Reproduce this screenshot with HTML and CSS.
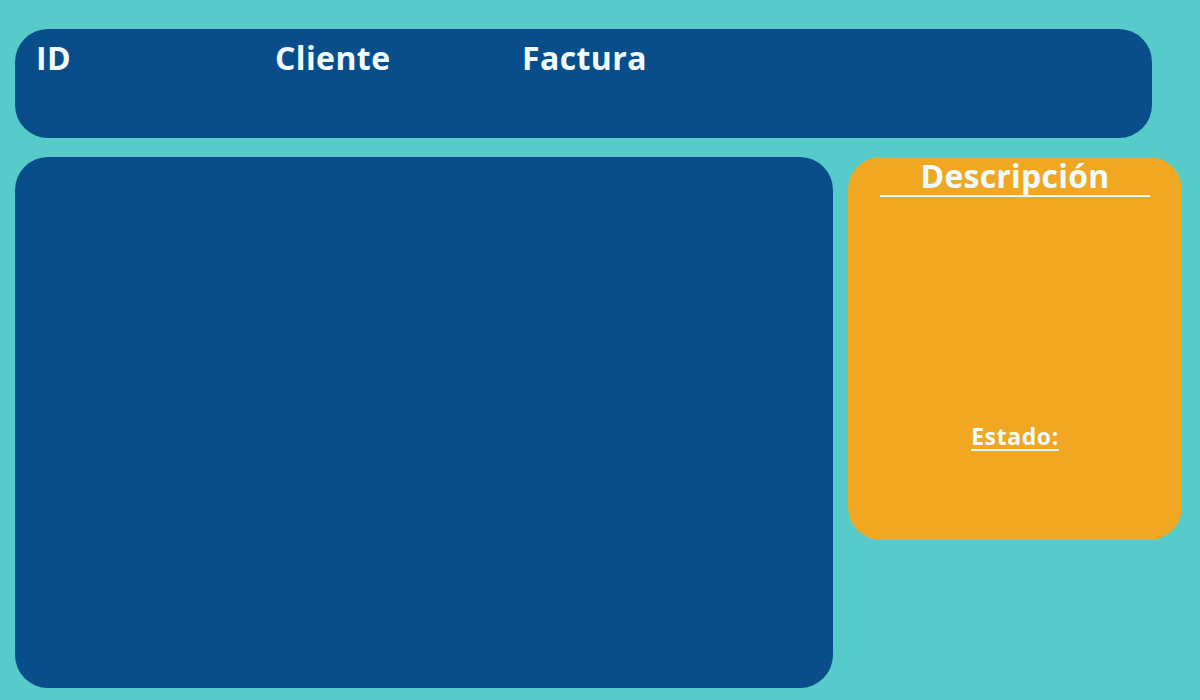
FILE: index.html
```html
<!DOCTYPE html>
<html lang="es">
<head>
<meta charset="utf-8">
<title>Facturas</title>
<link rel="stylesheet" href="styles.css">
</head>
<body>
<div class="page">
  <header class="header">
    <span class="col col-id">ID</span>
    <span class="col col-cliente">Cliente</span>
    <span class="col col-factura">Factura</span>
  </header>
  <div class="content">
    <section class="main"></section>
    <aside class="side">
      <h2 class="side-title">Descripción</h2>
      <div class="status">Estado:</div>
    </aside>
  </div>
</div>
</body>
</html>
```
FILE: styles.css
```css
* { box-sizing: border-box; }
html, body { margin: 0; padding: 0; }
body {
  width: 1200px;
  height: 700px;
  background: #57cbca;
  font-family: "Open Sans", "Noto Sans", sans-serif;
  color: #effbff;
  overflow: hidden;
}
.page {
  padding: 29px 0 0 15px;
  display: flex;
  flex-direction: column;
  gap: 19px;
}
.header {
  width: 1137px;
  height: 109px;
  background: #094e8b;
  border-radius: 33px;
  display: flex;
  padding: 7px 0 0 21px;
  font-weight: 700;
  font-size: 32px;
  line-height: 44px;
  letter-spacing: 0.4px;
}
.col-id { width: 239px; }
.col-cliente { width: 247px; }
.content {
  display: flex;
  gap: 15px;
  align-items: flex-start;
}
.main {
  width: 818px;
  height: 531px;
  background: #094e8b;
  border-radius: 33px;
}
.side {
  width: 334px;
  height: 383px;
  background: #f0a823;
  border-radius: 33px;
  display: flex;
  flex-direction: column;
  align-items: center;
}
.side-title {
  margin: 0;
  width: 270px;
  text-align: center;
  font-size: 32px;
  font-weight: 700;
  line-height: 38px;
  letter-spacing: 0.2px;
  border-bottom: 2px solid #effbff;
}
.status {
  margin-top: 223px;
  font-size: 23px;
  font-weight: 700;
  line-height: 32px;
  letter-spacing: 0.6px;
  text-decoration: underline;
  text-decoration-thickness: 2px;
  text-underline-offset: 4px;
}
```
